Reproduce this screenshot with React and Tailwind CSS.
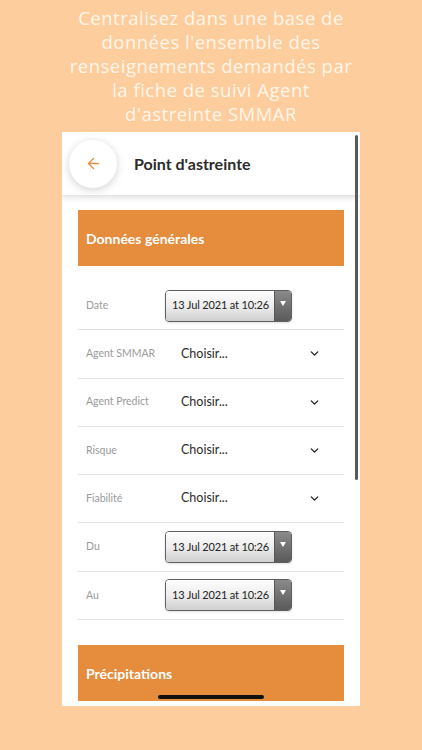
import { ChevronDown, ArrowLeft } from 'lucide-react';

const rows = [
  { label: 'Date', type: 'date' },
  { label: 'Agent SMMAR', type: 'select' },
  { label: 'Agent Predict', type: 'select' },
  { label: 'Risque', type: 'select' },
  { label: 'Fiabilité', type: 'select' },
  { label: 'Du', type: 'date' },
  { label: 'Au', type: 'date' },
];

function DatePicker() {
  return (
    <div className="ml-[79px] flex h-[32px] w-[127px] overflow-hidden rounded-[4px] border border-[#5f5f5f] shadow-sm">
      <div className="flex flex-1 items-center whitespace-nowrap bg-gradient-to-b from-[#fdfdfd] via-[#eeeeee] to-[#cfcfcf] pl-[6px] text-[11px] tracking-[-0.15px] text-[#222]">
        13 Jul 2021 at 10:26
      </div>
      <div className="flex w-[17px] items-start justify-center border-l border-[#555] bg-gradient-to-b from-[#8a8a8a] to-[#5a5a5a] pt-[10px]">
        <span className="block h-0 w-0 border-x-[3px] border-t-[5px] border-x-transparent border-t-white" />
      </div>
    </div>
  );
}

export default function App() {
  return (
    <div
      className="relative flex h-[750px] w-[422px] flex-col items-center overflow-hidden bg-[#fdcd9d]"
      style={{ fontFamily: 'Lato, "Open Sans", sans-serif' }}
    >
      <p
        className="mt-[6px] w-[400px] text-center text-[18.5px] font-normal leading-[24px] tracking-[0.5px] text-[#fff6ea]"
        style={{ fontFamily: '"Open Sans", sans-serif' }}
      >
        Centralisez dans une base de
        <br />
        données l'ensemble des
        <br />
        renseignements demandés par
        <br />
        la fiche de suivi Agent
        <br />
        d'astreinte SMMAR
      </p>

      <div className="relative mt-[6px] h-[574px] w-[298px] overflow-hidden bg-white">
        {/* header */}
        <div className="relative z-10 flex h-[63px] items-center bg-white shadow-[0_2px_6px_rgba(0,0,0,0.15)]">
          <div className="ml-[7px] flex h-[48px] w-[48px] items-center justify-center rounded-full bg-white shadow-[0_2px_8px_rgba(0,0,0,0.18)]">
            <ArrowLeft className="h-[17px] w-[17px] text-[#e58c3d]" strokeWidth={1.8} />
          </div>
          <h1 className="ml-[17px] text-[16px] font-bold text-[#2b2b2b]">Point d'astreinte</h1>
        </div>

        {/* scrollbar */}
        <div className="absolute right-[2px] top-[3px] z-20 h-[345px] w-[3px] rounded-full bg-[#5a5a5a]" />

        <div className="px-[16px] pt-[15px]">
          <div className="flex h-[56px] items-center bg-[#e58c3d] pl-[8px] text-[14px] font-bold text-white">
            Données générales
          </div>

          <div className="pt-[16px]">
            {rows.map((row) => (
              <div
                key={row.label}
                className="box-border flex h-[48.3px] items-center border-b border-[#e3e3e3] pl-[8px]"
              >
                <span className="w-[0px] whitespace-nowrap text-[10.5px] text-[#9a9a9a]">{row.label}</span>
                {row.type === 'date' ? (
                  <DatePicker />
                ) : (
                  <div className="ml-[95px] flex flex-1 items-center pr-[23px]">
                    <span className="flex-1 text-[12.5px] text-[#2b2b2b]">Choisir...</span>
                    <ChevronDown className="h-[13px] w-[13px] text-[#222]" strokeWidth={2.5} />
                  </div>
                )}
              </div>
            ))}
          </div>

          <div className="mt-[25px] flex h-[56px] items-center bg-[#e58c3d] pl-[8px] text-[14px] font-bold text-white">
            Précipitations
          </div>
        </div>

        {/* home indicator */}
        <div className="absolute bottom-[7px] left-[96px] h-[4px] w-[106px] rounded-full bg-[#111]" />
      </div>
    </div>
  );
}
